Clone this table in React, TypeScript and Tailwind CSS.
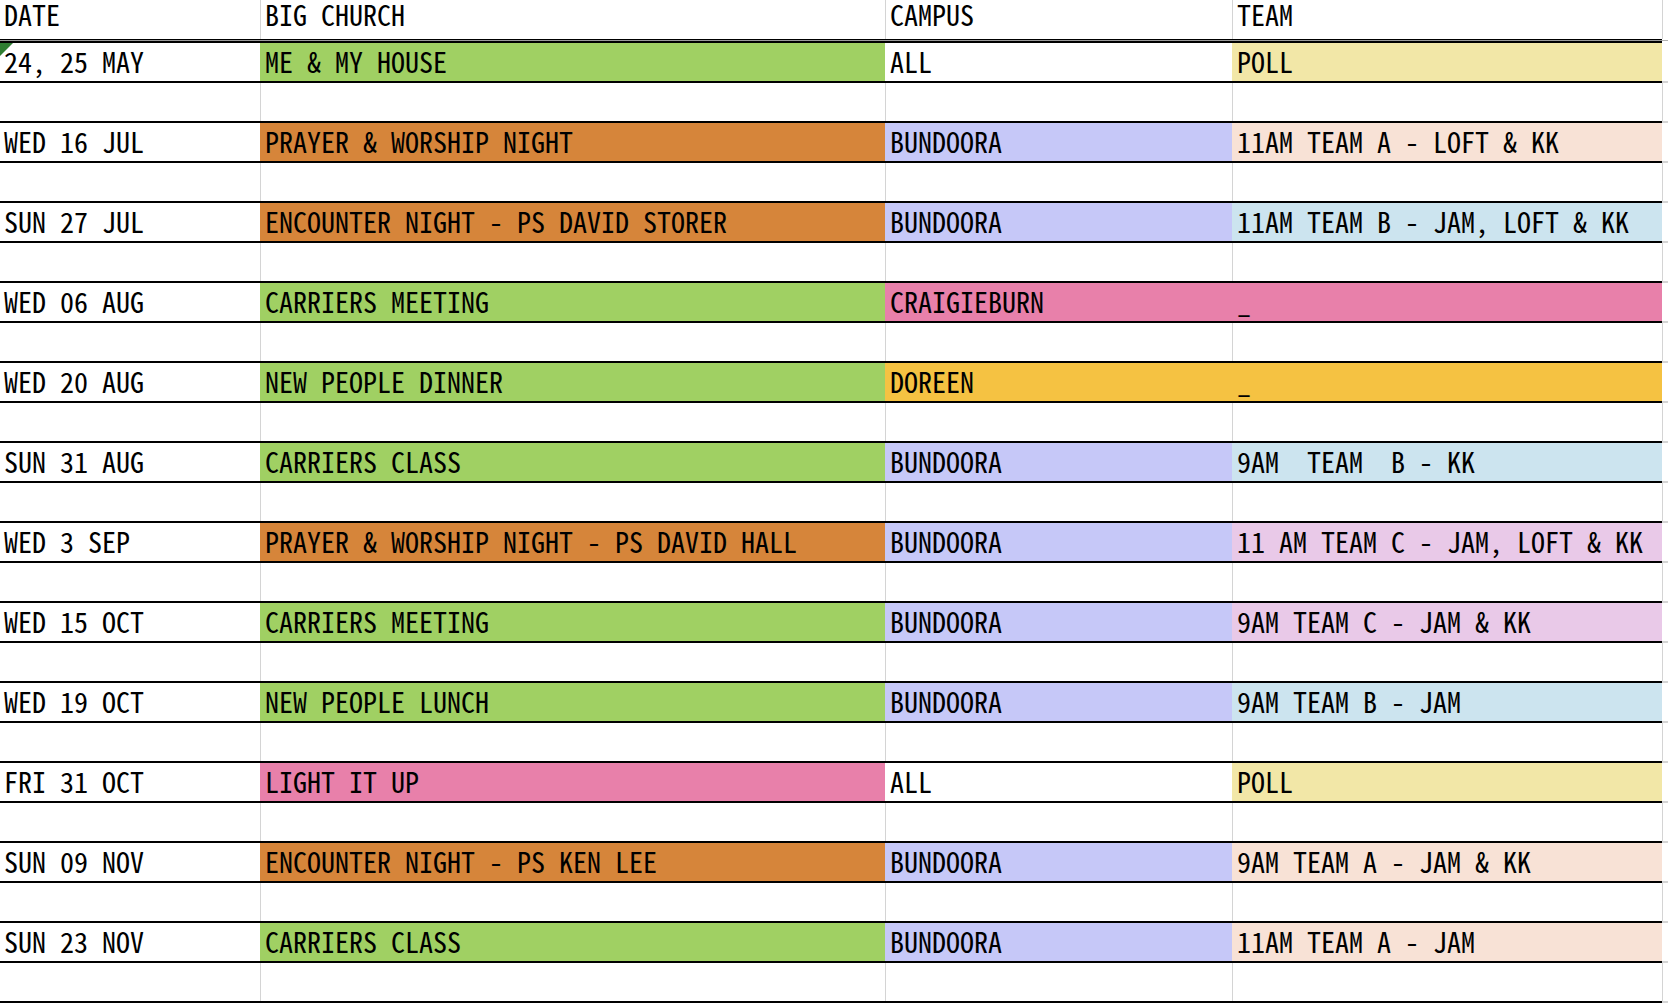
import React from "react";

type Tone =
  | "white"
  | "green"
  | "orange"
  | "lav"
  | "peach"
  | "blue"
  | "yellow"
  | "pink"
  | "gold"
  | "purple";

const BG: Record<Tone, string> = {
  white: "bg-white",
  green: "bg-[#a0d063]",
  orange: "bg-[#d6853a]",
  lav: "bg-[#c6c8f8]",
  peach: "bg-[#f8e2d6]",
  blue: "bg-[#cce4ef]",
  yellow: "bg-[#f2e7a7]",
  pink: "bg-[#e880aa]",
  gold: "bg-[#f5c242]",
  purple: "bg-[#e9c9e8]",
};

type Cell = { text: string; tone: Tone };
type Row = { date: string; cells: [Cell, Cell, Cell] };

const rows: Row[] = [
  { date: "24, 25 MAY", cells: [{ text: "ME & MY HOUSE", tone: "green" }, { text: "ALL", tone: "white" }, { text: "POLL", tone: "yellow" }] },
  { date: "WED 16 JUL", cells: [{ text: "PRAYER & WORSHIP NIGHT", tone: "orange" }, { text: "BUNDOORA", tone: "lav" }, { text: "11AM TEAM A - LOFT & KK", tone: "peach" }] },
  { date: "SUN 27 JUL", cells: [{ text: "ENCOUNTER NIGHT - PS DAVID STORER", tone: "orange" }, { text: "BUNDOORA", tone: "lav" }, { text: "11AM TEAM B - JAM, LOFT & KK", tone: "blue" }] },
  { date: "WED 06 AUG", cells: [{ text: "CARRIERS MEETING", tone: "green" }, { text: "CRAIGIEBURN", tone: "pink" }, { text: "_", tone: "pink" }] },
  { date: "WED 20 AUG", cells: [{ text: "NEW PEOPLE DINNER", tone: "green" }, { text: "DOREEN", tone: "gold" }, { text: "_", tone: "gold" }] },
  { date: "SUN 31 AUG", cells: [{ text: "CARRIERS CLASS", tone: "green" }, { text: "BUNDOORA", tone: "lav" }, { text: "9AM  TEAM  B - KK", tone: "blue" }] },
  { date: "WED 3 SEP", cells: [{ text: "PRAYER & WORSHIP NIGHT - PS DAVID HALL", tone: "orange" }, { text: "BUNDOORA", tone: "lav" }, { text: "11 AM TEAM C - JAM, LOFT & KK", tone: "purple" }] },
  { date: "WED 15 OCT", cells: [{ text: "CARRIERS MEETING", tone: "green" }, { text: "BUNDOORA", tone: "lav" }, { text: "9AM TEAM C - JAM & KK", tone: "purple" }] },
  { date: "WED 19 OCT", cells: [{ text: "NEW PEOPLE LUNCH", tone: "green" }, { text: "BUNDOORA", tone: "lav" }, { text: "9AM TEAM B - JAM", tone: "blue" }] },
  { date: "FRI 31 OCT", cells: [{ text: "LIGHT IT UP", tone: "pink" }, { text: "ALL", tone: "white" }, { text: "POLL", tone: "yellow" }] },
  { date: "SUN 09 NOV", cells: [{ text: "ENCOUNTER NIGHT - PS KEN LEE", tone: "orange" }, { text: "BUNDOORA", tone: "lav" }, { text: "9AM TEAM A - JAM & KK", tone: "peach" }] },
  { date: "SUN 23 NOV", cells: [{ text: "CARRIERS CLASS", tone: "green" }, { text: "BUNDOORA", tone: "lav" }, { text: "11AM TEAM A - JAM", tone: "peach" }] },
];

const WIDTHS = ["w-[260px]", "w-[625px]", "w-[347px]", "w-[430px]"];

function CellBox({
  text,
  tone,
  index,
  grid,
  header,
  children,
}: {
  text: string;
  tone: Tone;
  index: number;
  grid: boolean;
  header?: boolean;
  children?: React.ReactNode;
}) {
  const border =
    index === 0 ? "" : grid ? "border-l border-l-[#d4d4d4]" : "border-l border-l-transparent";
  return (
    <div
      className={`relative shrink-0 h-full ${WIDTHS[index]} ${BG[tone]} ${border} pl-[4px] overflow-visible whitespace-pre text-[28px] text-black ${
        header ? "leading-[29px]" : "leading-[36px]"
      }`}
    >
      {children}
      {text}
    </div>
  );
}

function Tail({ grid }: { grid: boolean }) {
  return (
    <div
      className={`flex-1 h-full bg-white border-l ${grid ? "border-l-[#d4d4d4]" : "border-l-transparent"}`}
    />
  );
}

function BottomLine() {
  return (
    <div className="flex h-[2px]">
      <div className="w-[1662px] bg-black" />
      <div className="flex-1 bg-[#d4d4d4]" />
    </div>
  );
}

function DataRow({ row, first }: { row: Row; first: boolean }) {
  const tones: Tone[] = ["white", row.cells[0].tone, row.cells[1].tone, row.cells[2].tone];
  const texts = [row.date, row.cells[0].text, row.cells[1].text, row.cells[2].text];
  return (
    <div className="flex flex-col">
      <div className="flex h-[38px]">
        {texts.map((t, i) => (
          <CellBox
            key={i}
            text={t}
            tone={tones[i]}
            index={i}
            grid={i > 0 && tones[i] === "white" && tones[i - 1] === "white"}
          >
            {first && i === 0 ? (
              <svg className="absolute left-0 top-0" width="13" height="13" viewBox="0 0 13 13">
                <polygon points="0,0 13,0 0,13" fill="#2f7d32" />
              </svg>
            ) : null}
          </CellBox>
        ))}
        <Tail grid={tones[3] === "white"} />
      </div>
      <BottomLine />
    </div>
  );
}

function EmptyRow() {
  return (
    <div className="flex flex-col">
      <div className="flex h-[38px]">
        {[0, 1, 2, 3].map((i) => (
          <CellBox key={i} text="" tone="white" index={i} grid={true} />
        ))}
        <Tail grid={true} />
      </div>
      <BottomLine />
    </div>
  );
}

export default function App() {
  const headers = ["DATE", "BIG CHURCH", "CAMPUS", "TEAM"];
  return (
    <div className="w-[1668px] h-[1006px] overflow-hidden bg-white font-['Noto_Sans_Mono_CJK_JP','Noto_Sans_CJK_JP',monospace]">
      <div className="flex flex-col">
        <div className="flex h-[39px]">
          {headers.map((h, i) => (
            <CellBox key={i} text={h} tone="white" index={i} grid={true} header />
          ))}
          <Tail grid={true} />
        </div>
        <div className="flex h-px">
          <div className="w-[1662px] bg-black" />
          <div className="flex-1 bg-white" />
        </div>
        <div className="flex h-px">
          <div className="w-[1662px] bg-[#9a9a9a]" />
          <div className="flex-1 bg-[#b0b0b0]" />
        </div>
        <div className="flex h-[2px]">
          <div className="w-[1662px] bg-black" />
          <div className="flex-1 bg-white" />
        </div>
        {rows.map((r, i) => (
          <React.Fragment key={i}>
            <DataRow row={r} first={i === 0} />
            <EmptyRow />
          </React.Fragment>
        ))}
      </div>
    </div>
  );
}
